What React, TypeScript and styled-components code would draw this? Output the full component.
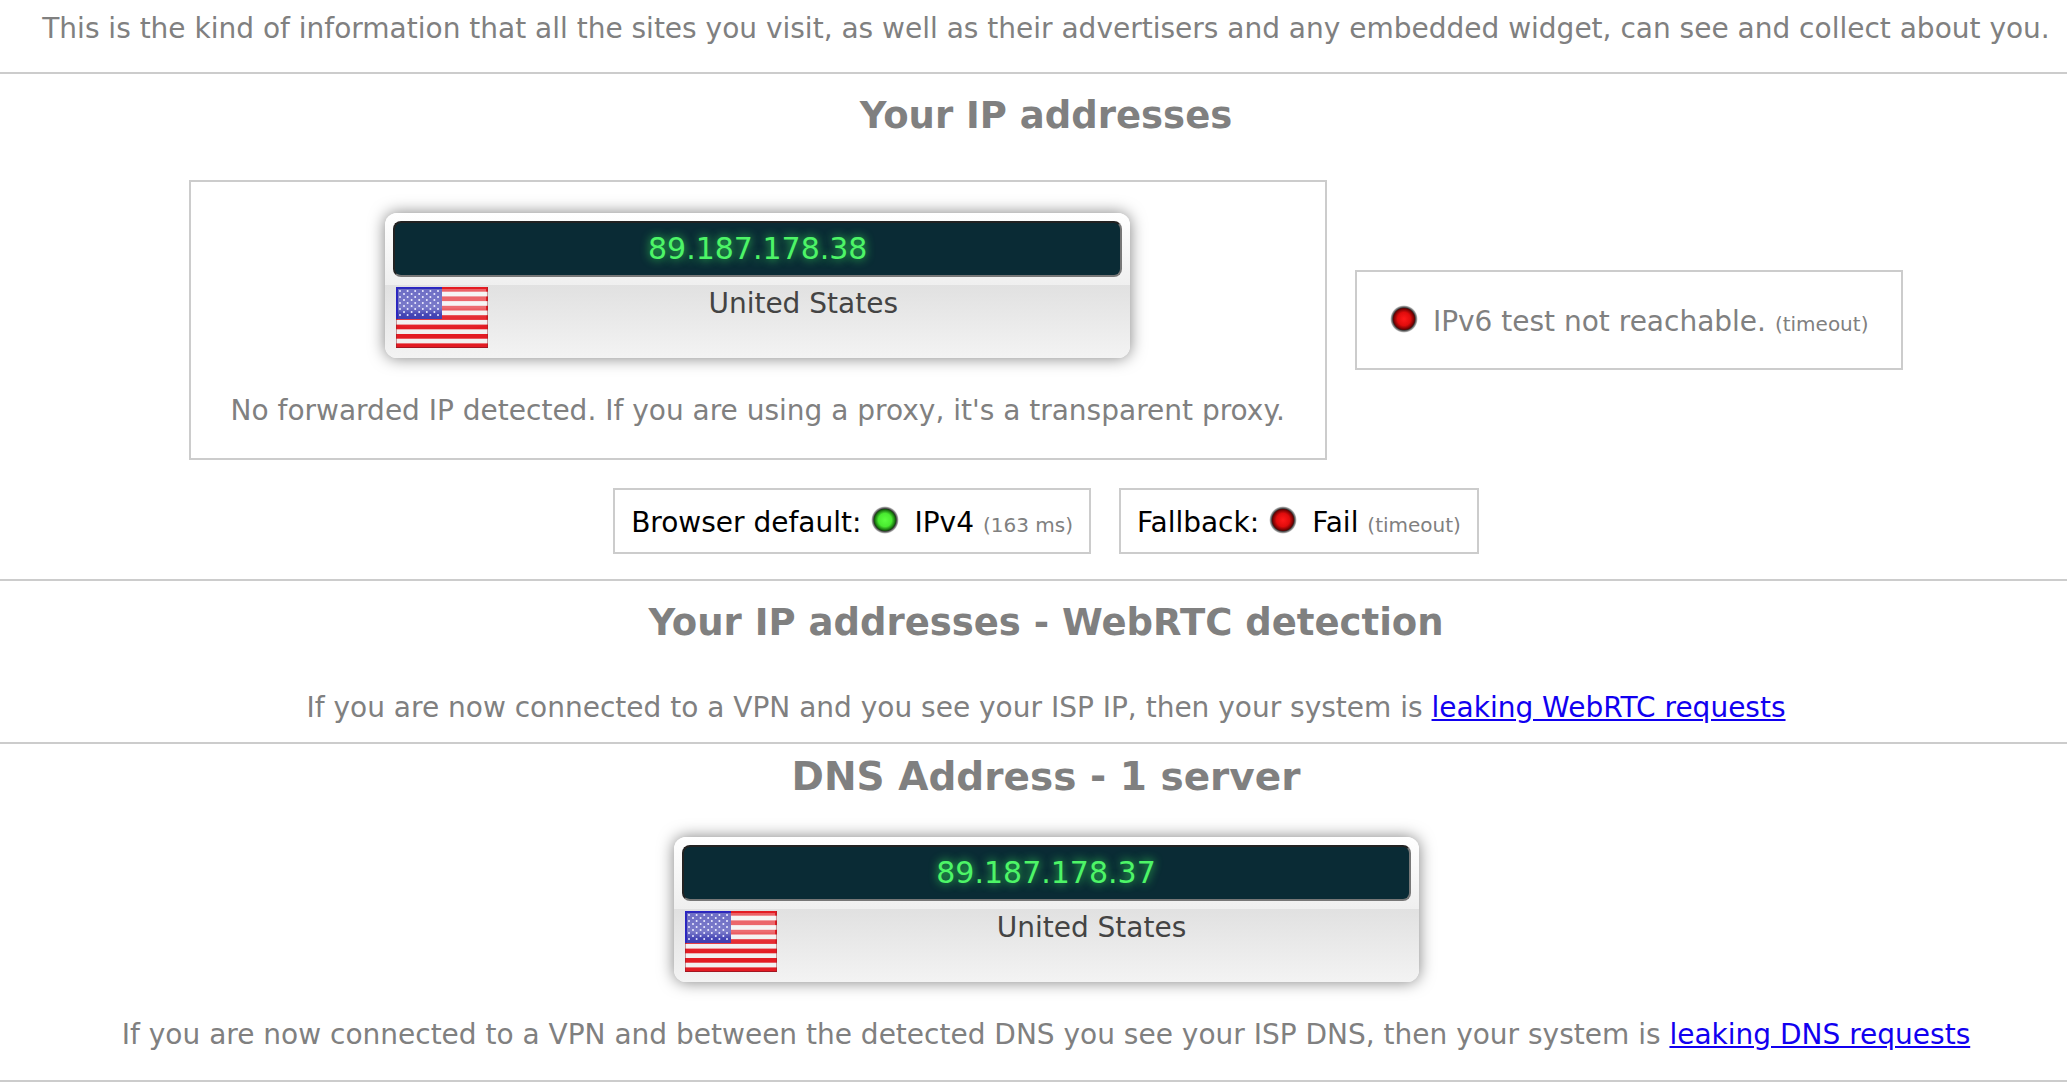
import React, { useId } from "react";
import styled, { createGlobalStyle } from "styled-components";

const GlobalStyle = createGlobalStyle`
  *, *::before, *::after { box-sizing: border-box; }
  body {
    margin: 0;
    background: #fff;
    color: #808080;
    font-family: "DejaVu Sans", Verdana, sans-serif;
    font-size: 28px;
    line-height: 34px;
  }
`;

const Section = styled.section<{ $top: number; $bottom: number }>`
  display: flex;
  flex-direction: column;
  align-items: center;
  padding: ${(p) => p.$top}px 0 ${(p) => p.$bottom}px 25px;
  border-bottom: 2px solid #ccc;
`;

const Title = styled.h2<{ $gap: number; $large?: boolean }>`
  margin: 0 0 ${(p) => p.$gap}px;
  font-size: ${(p) => (p.$large ? 39 : 37)}px;
  line-height: 44px;
  font-weight: bold;
  text-align: center;
`;

const Text = styled.p`
  margin: 0;
  text-align: center;
`;

const Link = styled.a`
  color: #1100f0;
  text-decoration: underline;
`;

const BoxRow = styled.div<{ $gap?: number }>`
  display: flex;
  flex-wrap: wrap;
  align-items: center;
  justify-content: center;
  gap: 28px;
  margin-bottom: ${(p) => p.$gap ?? 0}px;
`;

const Box = styled.div`
  display: flex;
  flex-direction: column;
  align-items: center;
  gap: 36px;
  padding: 31px 40px 30px;
  border: 2px solid #ccc;
`;

const StatusBox = styled(Box)<{ $compact?: boolean }>`
  flex-direction: row;
  gap: 10px;
  padding: ${(p) => (p.$compact ? "16px 16px 12px" : "33px 33px 29px")};
  color: ${(p) => (p.$compact ? "#000" : "inherit")};
`;

const Small = styled.small`
  font-size: 20px;
  line-height: 20px;
  color: #808080;
`;

const Card = styled.div`
  width: 745px;
  max-width: 100%;
  padding: 8px 8px 10px;
  border-radius: 12px;
  background: linear-gradient(#fff 0%, #efefef 50%, #e1e1e1 50%, #f3f3f3 100%);
  box-shadow: 0 0 16px rgba(0, 0, 0, 0.5);
`;

const Display = styled.div`
  padding: 9px;
  border: 2px solid;
  border-color: #222 #777 #777 #222;
  border-radius: 8px;
  background: #0a2b35;
  color: #4df567;
  font-size: 30px;
  line-height: 34px;
  text-align: center;
  text-shadow: 0 0 10px #35e055;
`;

const Place = styled.div`
  display: flex;
  align-items: flex-start;
  padding: 10px 4px 0 3px;
  color: #444;
`;

const Country = styled.span`
  flex: 1;
  text-align: center;
`;

const FlagSvg = styled.svg`
  width: 92px;
  height: 61px;
  display: block;
`;

const LedSvg = styled.svg`
  width: 28px;
  height: 28px;
  margin: 0 5px 6px 0;
`;

function Flag() {
  const id = useId();
  const stars: React.ReactNode[] = [];
  for (let r = 0; r < 9; r++) {
    const n = r % 2 ? 5 : 6;
    for (let c = 0; c < n; c++) {
      stars.push(
        <circle key={`${r}-${c}`} cx={(r % 2 ? 8 : 4) + c * 7.6} cy={4 + r * 3} r="1" fill="#e4e4ff" />
      );
    }
  }
  return (
    <FlagSvg viewBox="0 0 92 61" role="img" aria-label="United States flag">
      <defs>
        <linearGradient id={id} x1="0" y1="0" x2="0" y2="1">
          <stop offset="0" stopColor="#fff" stopOpacity="0.3" />
          <stop offset="0.45" stopColor="#fff" stopOpacity="0.36" />
          <stop offset="0.62" stopColor="#fff" stopOpacity="0.1" />
          <stop offset="1" stopColor="#fff" stopOpacity="0" />
        </linearGradient>
      </defs>
      <rect width="92" height="61" fill="#f2f0f0" />
      {[0, 2, 4, 6, 8, 10, 12].map((i) => (
        <rect key={i} y={i * 4.7} width="92" height="4.7" fill="#e31b23" />
      ))}
      <rect width="46" height="32" fill="#3030ac" />
      {stars}
      <path d="M2 2H90V38C68 45 22 45 2 38Z" fill={`url(#${id})`} />
      <path d="M.5 .5V31" stroke="#2a24c4" strokeWidth="2" />
      <path d="M0 .5H46" stroke="#2a24c4" strokeWidth="2" />
      <path d="M0 60.5H92" stroke="#a31622" />
      <path d="M91.5 0V61M.5 32V61" stroke="#8a2028" strokeOpacity="0.45" />
    </FlagSvg>
  );
}

function Led({ color }: { color: "green" | "red" }) {
  const id = useId();
  const [core, mid, edge] = color === "green" ? ["#5cff40", "#49ea30", "#0c5206"] : ["#ff1a1a", "#e00c0c", "#5a0000"];
  return (
    <LedSvg viewBox="0 0 28 28" role="img" aria-label={color}>
      <defs>
        <radialGradient id={`${id}b`}>
          <stop offset="0" stopColor={core} />
          <stop offset="0.6" stopColor={mid} />
          <stop offset="1" stopColor={edge} />
        </radialGradient>
        <radialGradient id={`${id}r`}>
          <stop offset="0.8" stopColor="#333" />
          <stop offset="0.92" stopColor="#999" stopOpacity="0.9" />
          <stop offset="1" stopColor="#ddd" stopOpacity="0" />
        </radialGradient>
      </defs>
      <circle cx="14" cy="14" r="14" fill={`url(#${id}r)`} />
      <circle cx="14" cy="14" r="11" fill={`url(#${id}b)`} />
    </LedSvg>
  );
}

function IpCard({ ip, country }: { ip: string; country: string }) {
  return (
    <Card>
      <Display>{ip}</Display>
      <Place>
        <Flag />
        <Country>{country}</Country>
      </Place>
    </Card>
  );
}

export default function App() {
  return (
    <main>
      <GlobalStyle />
      <Section $top={12} $bottom={26}>
        <Text>
          This is the kind of information that all the sites you visit, as well as their advertisers and any embedded
          widget, can see and collect about you.
        </Text>
      </Section>
      <Section $top={20} $bottom={25}>
        <Title $gap={42}>Your IP addresses</Title>
        <BoxRow $gap={28}>
          <Box>
            <IpCard ip="89.187.178.38" country="United States" />
            <Text>No forwarded IP detected. If you are using a proxy, it's a transparent proxy.</Text>
          </Box>
          <StatusBox>
            <Led color="red" />
            <span>
              IPv6 test not reachable. <Small>(timeout)</Small>
            </span>
          </StatusBox>
        </BoxRow>
        <BoxRow>
          <StatusBox $compact>
            <span>Browser default:</span>
            <Led color="green" />
            <span>
              IPv4 <Small>(163 ms)</Small>
            </span>
          </StatusBox>
          <StatusBox $compact>
            <span>Fallback:</span>
            <Led color="red" />
            <span>
              Fail <Small>(timeout)</Small>
            </span>
          </StatusBox>
        </BoxRow>
      </Section>
      <Section $top={20} $bottom={17}>
        <Title $gap={46}>Your IP addresses - WebRTC detection</Title>
        <Text>
          If you are now connected to a VPN and you see your ISP IP, then your system is{" "}
          <Link href="#webrtc">leaking WebRTC requests</Link>
        </Text>
      </Section>
      <Section $top={11} $bottom={28}>
        <Title $gap={38} $large>
          DNS Address - 1 server
        </Title>
        <BoxRow $gap={36}>
          <IpCard ip="89.187.178.37" country="United States" />
        </BoxRow>
        <Text>
          If you are now connected to a VPN and between the detected DNS you see your ISP DNS, then your system is{" "}
          <Link href="#dns">leaking DNS requests</Link>
        </Text>
      </Section>
    </main>
  );
}
